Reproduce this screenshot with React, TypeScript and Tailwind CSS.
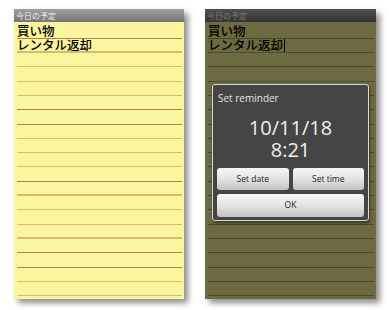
import React from 'react';

const jp = { fontFamily: '"Noto Sans CJK JP", "Noto Sans", sans-serif' };
const ui = { fontFamily: '"Open Sans", "Noto Sans", sans-serif' };

// line look per row on the yellow note, top to bottom
const yellowLines = [
    'h-px bg-[#b08045]',
    'h-[2px] bg-[#d6ba70]',
    'h-px bg-[#d8bc72]',
    'h-px bg-[#d8bc72]',
    'h-px bg-[#d8bc72]',
    'h-px bg-[#b08045]',
    'h-px bg-[#b08045]',
    'h-px bg-[#d8bc72]',
    'h-px bg-[#d8bc72]',
    'h-px bg-[#d8bc72]',
    'h-px bg-[#b08045]',
    'h-[2px] bg-[#d6ba70]',
    'h-px bg-[#d8bc72]',
    'h-px bg-[#d8bc72]',
    'h-[2px] bg-[#d6ba70]',
    'h-px bg-[#b08045]',
    'h-px bg-[#b08045]',
    'h-px bg-[#d8bc72]',
    'h-px bg-[#d8bc72]',
];

const texts = ['買い物', 'レンタル返却'];

function NoteRows({ dark }: { dark?: boolean }) {
    return (
        <div className="flex flex-col pt-[2.5px] pl-[3px] pr-[2px]">
            {yellowLines.map((cls, i) => (
                <div key={i} className="h-[14.3px] flex flex-col justify-end">
                    <div className="flex-1 flex items-center text-[12.5px] font-medium leading-none text-black" style={jp}>
                        {texts[i]}
                        {dark && i === 1 && <span className="ml-[1px] w-px h-[13px] bg-black" />}
                    </div>
                    <div className={dark ? 'h-px bg-[#4b4a2b]' : cls} />
                </div>
            ))}
        </div>
    );
}

function Header({ dark }: { dark?: boolean }) {
    return (
        <div
            className={`h-[13px] flex items-center pl-[2px] text-[8px] leading-none ${
                dark
                    ? 'bg-gradient-to-b from-[#505050] to-[#353535] text-[#7a7a7a]'
                    : 'bg-gradient-to-b from-[#a0a0a0] to-[#757575] text-[#f2f2f2]'
            }`}
            style={jp}
        >
            今日の予定
        </div>
    );
}

function DialogButton({ label, className }: { label: string; className?: string }) {
    return (
        <div
            className={`flex items-center justify-center rounded-[3px] bg-gradient-to-b from-[#f6f6f6] via-[#e4e4e4] to-[#c2c2c2] text-[8.5px] text-[#222] ${className}`}
            style={ui}
        >
            {label}
        </div>
    );
}

export default function App() {
    return (
        <div className="w-[390px] h-[310px] bg-white flex pt-[9px] pl-[14px] gap-[21px] overflow-hidden">
            {/* plain note */}
            <div className="w-[170px] h-[290px] flex flex-col shadow-[4px_4px_6px_rgba(0,0,0,0.45)]">
                <Header />
                <div className="flex-1 bg-[#fbf59f] overflow-hidden">
                    <NoteRows />
                </div>
            </div>

            {/* note with reminder dialog */}
            <div className="relative w-[171px] h-[290px] flex flex-col shadow-[4px_4px_6px_rgba(0,0,0,0.45)]">
                <Header dark />
                <div className="flex-1 bg-[#6b6a41] overflow-hidden">
                    <NoteRows dark />
                </div>

                <div className="absolute left-[7px] top-[75px] w-[157px] h-[137px] rounded-[3px] border border-[#d8d8d8] bg-[#454545] shadow-[1px_2px_3px_rgba(0,0,0,0.5)] flex flex-col px-[4px] pb-[3px]">
                    <div className="h-[26px] flex items-center pl-[1px] text-[10px] text-[#e4e4e4]" style={ui}>
                        Set reminder
                    </div>
                    <div className="flex flex-col items-center text-[20px] leading-[22px] text-[#f0f0f0] mt-[6px]" style={ui}>
                        <span>10/11/18</span>
                        <span>8:21</span>
                    </div>
                    <div className="mt-auto flex gap-[4px]">
                        <DialogButton label="Set date" className="flex-1 h-[22px]" />
                        <DialogButton label="Set time" className="flex-1 h-[22px]" />
                    </div>
                    <DialogButton label="OK" className="mt-[4px] h-[23px]" />
                </div>
            </div>
        </div>
    );
}
